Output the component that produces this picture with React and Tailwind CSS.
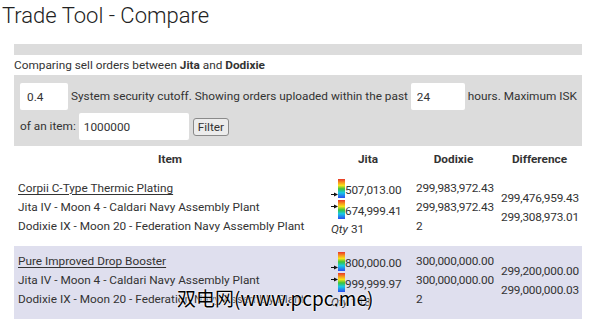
function Arrow({ className }) {
  return (
    <svg width="7" height="5" viewBox="0 0 7 5" className={className}>
      <path d="M0 2.5h3" stroke="#111" strokeWidth="1" />
      <path d="M3 0.5l4 2L3 4.5z" fill="#111" />
    </svg>
  )
}

function Price({ value, arrowClass }) {
  return (
    <div className="flex items-end h-[21px]">
      <div className="flex items-start">
        <Arrow className={arrowClass} />
        <span className="inline-block w-[7px] h-[19px] bg-[linear-gradient(to_bottom,#e8352a_0%,#f7941d_18%,#f5e31a_34%,#3cc43c_52%,#19c9e6_72%,#2a4df0_100%)]" />
      </div>
      <span className="leading-[15px] tracking-[-0.2px]">{value}</span>
    </div>
  )
}

const rows = [
  {
    name: 'Corpii C-Type Thermic Plating',
    jita: ['507,013.00', '674,999.41'],
    arrows: ['mt-[13px]', 'mt-[4px]'],
    qty: '31',
    dodixie: ['299,983,972.43', '299,983,972.43', '2'],
    diff: ['299,476,959.43', '299,308,973.01'],
    bg: 'bg-white',
  },
  {
    name: 'Pure Improved Drop Booster',
    jita: ['800,000.00', '999,999.97'],
    arrows: ['mt-[13px]', 'mt-[4px]'],
    qty: '118',
    dodixie: ['300,000,000.00', '300,000,000.00', '2'],
    diff: ['299,200,000.00', '299,000,000.03'],
    bg: 'bg-[#dfdfee]',
  },
]

export default function App() {
  return (
    <div className="relative w-[590px] h-[321px] overflow-hidden bg-white text-[#333] font-['Roboto','Lato',sans-serif] text-[11.8px]">
      <h1 className="pl-[2px] pt-[1px] text-[22px] leading-[29px] font-light text-[#222]">
        Trade Tool - Compare
      </h1>

      <div className="ml-[14px] w-[568px]">
        <div className="mt-[14px] h-[11px] bg-[#dcdcdc]" />
        <p className="leading-[20px] whitespace-nowrap">
          Comparing sell orders between <b className="font-bold">Jita</b> and <b className="font-bold">Dodixie</b>
        </p>

        <div className="bg-[#dcdcdc] pl-[6px] pt-[7px] h-[71px] whitespace-nowrap">
          <div className="flex items-center gap-[3px] h-[29px]">
            <input
              readOnly
              value="0.4"
              className="w-[48px] h-[27px] shrink-0 rounded-[2px] bg-white px-[7px] text-[11.8px] outline-none"
            />
            <span>System security cutoff. Showing orders uploaded within the past</span>
            <input
              readOnly
              value="24"
              className="w-[54px] h-[27px] shrink-0 rounded-[2px] bg-white px-[6px] text-[11.8px] outline-none"
            />
            <span>hours. Maximum ISK</span>
          </div>
          <div className="flex items-center gap-[3px] h-[31px]">
            <span>of an item:</span>
            <input
              readOnly
              value="1000000"
              className="w-[110px] h-[27px] shrink-0 rounded-[2px] bg-white px-[5px] text-[11.8px] outline-none"
            />
            <button className="ml-[1px] w-[36px] h-[18px] leading-[16px] rounded-[3px] border border-[#8a8a8a] bg-[#ececec] text-[11.8px]">
              Filter
            </button>
          </div>
        </div>

        <table className="w-[568px] table-fixed border-collapse">
          <thead>
            <tr className="h-[27px]">
              <th className="w-[312px] font-bold">Item</th>
              <th className="w-[84px] font-bold">Jita</th>
              <th className="w-[87px] font-bold">Dodixie</th>
              <th className="w-[85px] font-bold">Difference</th>
            </tr>
          </thead>
          <tbody>
            {rows.map((r) => (
              <tr key={r.name} className={`${r.bg} h-[73px]`}>
                <td className="pl-[4px] pb-[4px] align-middle leading-[19px] whitespace-nowrap">
                  <a href="#" className="underline underline-offset-2">{r.name}</a>
                  <div>Jita IV - Moon 4 - Caldari Navy Assembly Plant</div>
                  <div>Dodixie IX - Moon 20 - Federation Navy Assembly Plant</div>
                </td>
                <td className="pl-[5px] pb-[4px] align-middle whitespace-nowrap">
                  <Price value={r.jita[0]} arrowClass={r.arrows[0]} />
                  <Price value={r.jita[1]} arrowClass={r.arrows[1]} />
                  <div className="leading-[20px]">
                    <i>Qty</i> {r.qty}
                  </div>
                </td>
                <td className="pl-[6px] pb-[4px] align-middle leading-[19px] whitespace-nowrap tracking-[-0.2px]">
                  {r.dodixie.map((d, i) => (
                    <div key={i}>{d}</div>
                  ))}
                </td>
                <td className="pl-[4px] pb-[4px] align-middle leading-[19px] whitespace-nowrap tracking-[-0.2px]">
                  {r.diff.map((d, i) => (
                    <div key={i}>{d}</div>
                  ))}
                </td>
              </tr>
            ))}
          </tbody>
        </table>
      </div>

      <div className="absolute left-[177px] top-[286px] text-[19px] leading-[24px] text-black font-['Noto_Sans_CJK_SC','Liberation_Sans',sans-serif] [text-shadow:0_0_2px_#fff,0_0_2px_#fff,0_0_1px_#fff]">
        双电网(www.pcpc.me)
      </div>
    </div>
  )
}
